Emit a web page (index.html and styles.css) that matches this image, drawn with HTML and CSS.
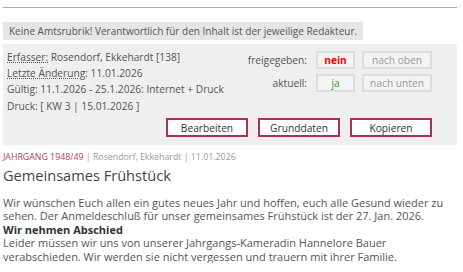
FILE: index.html
```html
<!DOCTYPE html>
<html lang="de">
<head>
    <meta charset="UTF-8">
    <title>Gemeinsames Frühstück</title>
    <link rel="stylesheet" href="styles.css">
</head>
<body>
    <div class="page">
        <hr class="top-line">

        <div class="notice">Keine Amtsrubrik! Verantwortlich für den Inhalt ist der jeweilige Redakteur.</div>

        <div class="admin-panel">
            <div class="admin-row">
                <div class="admin-info">
                    <p><abbr title="Ersteller">Erfasser:</abbr> Rosendorf, Ekkehardt [138]</p>
                    <p><abbr title="Zuletzt bearbeitet">Letzte Änderung:</abbr> 11.01.2026</p>
                    <p>Gültig: 11.1.2026 - 25.1.2026: Internet + Druck</p>
                    <p class="print">Druck: [ KW 3 | 15.01.2026 ]</p>
                </div>
                <div class="admin-status">
                    <div class="status-row">
                        <span class="status-label">freigegeben:</span>
                        <span class="status-box no">nein</span>
                        <a href="#" class="status-box move">nach oben</a>
                    </div>
                    <div class="status-row">
                        <span class="status-label">aktuell:</span>
                        <span class="status-box yes">ja</span>
                        <a href="#" class="status-box move">nach unten</a>
                    </div>
                </div>
            </div>
            <div class="admin-actions">
                <button type="button">Bearbeiten</button>
                <button type="button">Grunddaten</button>
                <button type="button">Kopieren</button>
            </div>
        </div>

        <div class="article">
            <div class="meta"><span class="rubric">JAHRGANG 1948/49</span> | Rosendorf, Ekkehardt | 11.01.2026</div>
            <h2>Gemeinsames Frühstück</h2>
            <p>Wir wünschen Euch allen ein gutes neues Jahr und hoffen, euch alle Gesund wieder zu sehen. Der Anmeldeschluß für unser gemeinsames Frühstück ist der 27. Jan. 2026.<br>
            <strong>Wir nehmen Abschied</strong><br>
            Leider müssen wir uns von unserer Jahrgangs-Kameradin Hannelore Bauer verabschieden. Wir werden sie nicht vergessen und trauern mit ihrer Familie.</p>
        </div>
    </div>
</body>
</html>
```

FILE: styles.css
```css
body {
    font-family: "Open Sans", Arial, sans-serif;
    color: #555;
    background-color: white;
    margin: 0;
}

.page {
    padding: 7px 6px 0 3px;
}

.top-line {
    border: 0;
    border-top: 1px solid #aaa;
    margin: 0 0 10px 0;
}

.notice {
    display: inline-block;
    background-color: #e6e6e6;
    font-size: 10px;
    padding: 2px 6px;
    line-height: 14px;
}

.admin-panel {
    background-color: #efefef;
    margin-top: 4px;
    padding: 5px 25px 8px 4px;
}

.admin-row {
    display: flex;
    justify-content: space-between;
}

.admin-info p {
    margin: 0;
    font-size: 10.2px;
    line-height: 16px;
}

.admin-info p.print {
    margin-top: 1px;
}

.admin-info abbr {
    text-decoration: underline dotted;
}

.admin-status {
    display: flex;
    flex-direction: column;
    gap: 5px;
    padding-top: 2px;
}

.status-row {
    display: flex;
    align-items: center;
    justify-content: flex-end;
    gap: 7px;
}

.status-label {
    font-size: 10.2px;
    margin-right: 2px;
}

.status-box {
    font-size: 10.2px;
    text-align: center;
    border: 2px solid #ddd;
    background-color: #f4f4f4;
    height: 14px;
    line-height: 14px;
    width: 35px;
}

.status-box.no {
    color: red;
    font-weight: bold;
}

.status-box.yes {
    color: #3a9a2a;
}

.status-box.move {
    width: 66px;
    color: #999;
    text-decoration: none;
}

.admin-actions {
    display: flex;
    justify-content: flex-end;
    gap: 10px;
    margin-top: 4px;
}

.admin-actions button {
    font-family: inherit;
    font-size: 10.2px;
    color: #333;
    background-color: white;
    border: 2px solid #a8324f;
    width: 82px;
    height: 19px;
    padding: 0;
}

.article .meta {
    font-size: 8.8px;
    color: #999;
    margin-top: 6px;
}

.article .rubric {
    color: #b03a5b;
}

.article h2 {
    font-weight: normal;
    font-size: 14.6px;
    color: #444;
    margin: 2px 0 11px 0;
}

.article p {
    font-size: 11px;
    line-height: 13.4px;
    margin: 0;
    color: #555;
}

.article strong {
    color: #333;
}
```
